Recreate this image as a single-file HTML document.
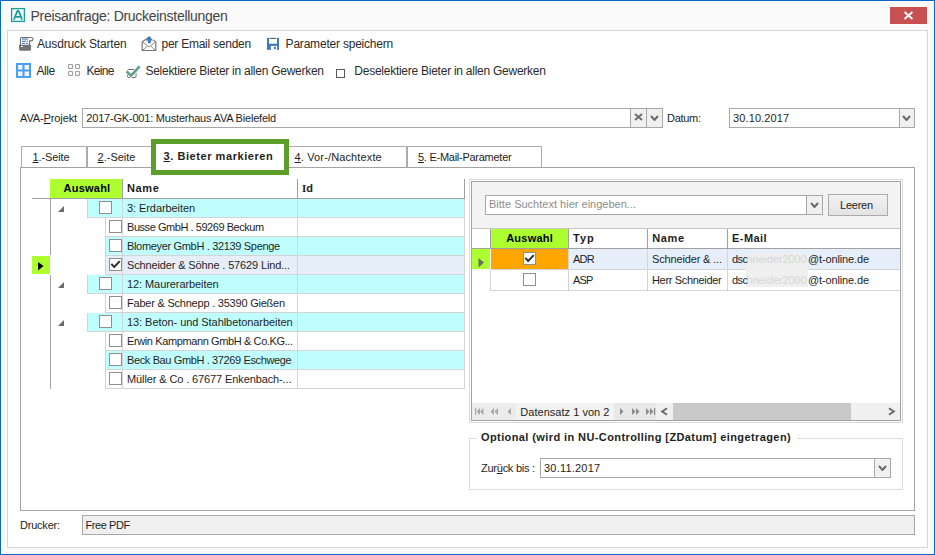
<!DOCTYPE html>
<html><head><meta charset="utf-8"><style>
html,body{margin:0;padding:0;}
body{width:935px;height:555px;position:relative;overflow:hidden;background:#fafafa;font-family:"Liberation Sans", sans-serif;}
body>div,body>svg{position:absolute;}
.t{white-space:nowrap;}
u{text-decoration:underline;text-underline-offset:1px;text-decoration-thickness:1px;}
</style></head><body>
<div style="left:0px;top:0px;width:935px;height:555px;border:1px solid #0a66c9;box-sizing:border-box;background:#fafafa;"></div>
<svg style="left:10px;top:7px" width="16" height="16" viewBox="0 0 16 16"><rect x="1.6" y="1.6" width="12.8" height="12.8" stroke="#1a9b9b" stroke-width="1.3" fill="none"/><path d="M3.9 12.8 L7.3 4 H8.7 L12.1 12.8 M5.4 9.8 H10.6" stroke="#1a9b9b" stroke-width="1.8" stroke-linejoin="bevel" fill="none"/></svg>
<div style="left:890px;top:7px;width:37px;height:17px;background:#c75050;"></div>
<svg style="left:903px;top:11px" width="11" height="9" viewBox="0 0 11 9"><path d="M1.5 1 L9.5 8 M9.5 1 L1.5 8" stroke="#fff" stroke-width="1.8" fill="none"/></svg>
<div style="left:7px;top:30px;width:921px;height:518px;border:1px solid #d6d6d6;box-sizing:border-box;background:#ffffff;"></div>
<svg style="left:18px;top:36px" width="16" height="16" viewBox="0 0 16 16"><path d="M2.5 9 V2.5 Q2.5 1.5 3.5 1.5 H13.2 A1.7 1.7 0 0 1 13.2 4.9 H11.5 V9" stroke="#707070" stroke-width="1.1" fill="#fff"/><rect x="4" y="2.5" width="6" height="1.1" fill="#3d7cc2"/><rect x="4" y="4.7" width="4" height="1.1" fill="#3d7cc2"/><rect x="9" y="4.7" width="1" height="1.1" fill="#3d7cc2"/><rect x="4" y="6.8" width="3" height="1.1" fill="#3d7cc2"/><rect x="8" y="6.8" width="2" height="1.1" fill="#3d7cc2"/><path d="M1.1 8.8 H13.1 V13.6 Q13.1 14.7 12 14.7 H2.2 Q1.1 14.7 1.1 13.6 Z" fill="#727272"/><rect x="3" y="10" width="1.8" height="1" fill="#fff"/></svg>
<svg style="left:141px;top:35px" width="17" height="17" viewBox="0 0 17 17"><path d="M1.2 15.5 V6.8 L8.1 2.2 L14.8 6.8 V15.5 Z" stroke="#767676" stroke-width="1.2" fill="#fff"/><path d="M2 7.3 L8.1 12 L14 7.3 M2 15 L6.2 11.3 M14 15 L10 11.3" stroke="#8a8a8a" stroke-width="1" fill="none"/><path d="M7 3 L12.2 3 L12.2 7 L7 7 Z" fill="#fff"/><path d="M8.3 1 L12 5.5 H9.8 V8.2 H6.8 V5.5 H4.6 Z" fill="#3d7cc2"/></svg>
<svg style="left:266px;top:37px" width="14" height="14" viewBox="0 0 14 14"><rect x="1" y="0.8" width="12" height="12.1" fill="#3b78c0"/><rect x="3" y="0.8" width="8" height="5.9" fill="#fff"/><rect x="3.7" y="1.1" width="6.5" height="0.9" fill="#555"/><rect x="4.8" y="8.9" width="6.3" height="4" fill="#fff"/><rect x="7.9" y="9.8" width="2" height="2.3" fill="#3b78c0"/></svg>
<svg style="left:16px;top:63px" width="15" height="15" viewBox="0 0 15 15"><rect x="0" y="0" width="15" height="15" fill="#4a9ff0"/><rect x="2" y="2" width="4.5" height="4.5" fill="#eef6ff"/><rect x="8.5" y="2" width="4.5" height="4.5" fill="#eef6ff"/><rect x="2" y="8.5" width="4.5" height="4.5" fill="#eef6ff"/><rect x="8.5" y="8.5" width="4.5" height="4.5" fill="#eef6ff"/></svg>
<svg style="left:67px;top:63px" width="14" height="14" viewBox="0 0 14 14"><rect x="1.5" y="1.5" width="4" height="4" rx="0.8" stroke="#a0a0a0" stroke-width="1.15" fill="none"/><rect x="3.0" y="3.0" width="1" height="1" fill="#e4e4e4"/><rect x="8.5" y="1.5" width="4" height="4" rx="0.8" stroke="#a0a0a0" stroke-width="1.15" fill="none"/><rect x="10.0" y="3.0" width="1" height="1" fill="#e4e4e4"/><rect x="1.5" y="8.5" width="4" height="4" rx="0.8" stroke="#a0a0a0" stroke-width="1.15" fill="none"/><rect x="3.0" y="10.0" width="1" height="1" fill="#e4e4e4"/><rect x="8.5" y="8.5" width="4" height="4" rx="0.8" stroke="#a0a0a0" stroke-width="1.15" fill="none"/><rect x="10.0" y="10.0" width="1" height="1" fill="#e4e4e4"/></svg>
<svg style="left:122px;top:60px" width="20" height="20" viewBox="0 0 20 20"><rect x="5.5" y="9.5" width="8.5" height="8" rx="1" stroke="#6d6d6d" stroke-width="1" fill="none"/><path d="M4.6 11.3 L9 15.6 L17.6 6.4" stroke="#fff" stroke-width="4" fill="none"/><path d="M4.6 11.3 L9 15.6 L17.6 6.4" stroke="#5c9e8a" stroke-width="2.5" fill="none"/></svg>
<div style="left:336px;top:69px;width:9px;height:9px;border:1px solid #5a5a5a;box-sizing:border-box;background:#fff;"></div>
<div style="left:82px;top:108px;width:581px;height:20px;border:1px solid #a8a8a8;box-sizing:border-box;background:#fff;"></div>
<div style="left:630px;top:108px;width:1px;height:20px;background:#a8a8a8;"></div>
<div style="left:646px;top:108px;width:1px;height:20px;background:#a8a8a8;"></div>
<div style="left:631px;top:109px;width:15px;height:18px;background:#f0f0f0;"></div>
<div style="left:647px;top:109px;width:15px;height:18px;background:#f0f0f0;"></div>
<svg style="left:634px;top:113px" width="9" height="8" viewBox="0 0 9 8"><path d="M1 1 L8 7 M8 1 L1 7" stroke="#6a6a6a" stroke-width="1.8"/></svg>
<svg style="left:650px;top:115px" width="9" height="6" viewBox="0 0 9 6"><path d="M1 1 L4.5 5 L8 1" stroke="#6a6a6a" stroke-width="2" fill="none"/></svg>
<div style="left:729px;top:108px;width:186px;height:20px;border:1px solid #a8a8a8;box-sizing:border-box;background:#fff;"></div>
<div style="left:899px;top:108px;width:1px;height:20px;background:#a8a8a8;"></div>
<div style="left:900px;top:109px;width:14px;height:18px;background:#f0f0f0;"></div>
<svg style="left:902px;top:115px" width="9" height="6" viewBox="0 0 9 6"><path d="M1 1 L4.5 5 L8 1" stroke="#6a6a6a" stroke-width="2" fill="none"/></svg>
<div style="left:21px;top:146px;width:66px;height:23px;border:1px solid #acacac;box-sizing:border-box;background:#fff;"></div>
<div style="left:87px;top:146px;width:66px;height:23px;border:1px solid #acacac;box-sizing:border-box;background:#fff;"></div>
<div style="left:288px;top:146px;width:119px;height:23px;border:1px solid #acacac;box-sizing:border-box;background:#fff;"></div>
<div style="left:407px;top:146px;width:135px;height:23px;border:1px solid #acacac;box-sizing:border-box;background:#fff;"></div>
<div style="left:20px;top:167px;width:895px;height:344px;border:1px solid #a3a3a3;box-sizing:border-box;background:#fff;"></div>
<div style="left:151px;top:139px;width:138px;height:36px;background:#fff;border:5px solid #5c9e2a;box-sizing:border-box;"></div>
<div style="left:50px;top:179px;width:72px;height:19px;background:#adff2f;"></div>
<div style="left:32px;top:198px;width:433px;height:1px;background:#a0a0a0;"></div>
<div style="left:122px;top:179px;width:1px;height:20px;background:#a0a0a0;"></div>
<div style="left:297px;top:179px;width:1px;height:20px;background:#a0a0a0;"></div>
<div style="left:464px;top:179px;width:1px;height:20px;background:#a0a0a0;"></div>
<div style="left:50px;top:199px;width:1px;height:56px;background:#a0a0a0;"></div>
<div style="left:50px;top:275px;width:1px;height:114px;background:#a0a0a0;"></div>
<div style="left:87px;top:199px;width:377px;height:18px;background:#c0ffff;"></div>
<div style="left:87px;top:217px;width:378px;height:1px;background:#d4d4d4;"></div>
<div style="left:87px;top:199px;width:1px;height:19px;background:#d4d4d4;"></div>
<div style="left:122px;top:199px;width:1px;height:19px;background:#d4d4d4;"></div>
<div style="left:297px;top:199px;width:1px;height:19px;background:#d4d4d4;"></div>
<div style="left:464px;top:199px;width:1px;height:19px;background:#d4d4d4;"></div>
<svg style="left:57px;top:205px" width="8" height="8" viewBox="0 0 8 8"><path d="M7 1 V7 H1 Z" fill="#6b6b6b"/></svg>
<div style="left:99px;top:201px;width:13px;height:13px;border:1px solid #8f8f8f;box-sizing:border-box;background:#fff;"></div>
<div style="left:105px;top:218px;width:359px;height:18px;background:#fff;"></div>
<div style="left:105px;top:236px;width:360px;height:1px;background:#d4d4d4;"></div>
<div style="left:105px;top:218px;width:1px;height:19px;background:#d4d4d4;"></div>
<div style="left:122px;top:218px;width:1px;height:19px;background:#d4d4d4;"></div>
<div style="left:297px;top:218px;width:1px;height:19px;background:#d4d4d4;"></div>
<div style="left:464px;top:218px;width:1px;height:19px;background:#d4d4d4;"></div>
<div style="left:109px;top:220px;width:13px;height:13px;border:1px solid #8f8f8f;box-sizing:border-box;background:#fff;"></div>
<div style="left:105px;top:237px;width:359px;height:18px;background:#c0ffff;"></div>
<div style="left:105px;top:255px;width:360px;height:1px;background:#d4d4d4;"></div>
<div style="left:105px;top:237px;width:1px;height:19px;background:#d4d4d4;"></div>
<div style="left:122px;top:237px;width:1px;height:19px;background:#d4d4d4;"></div>
<div style="left:297px;top:237px;width:1px;height:19px;background:#d4d4d4;"></div>
<div style="left:464px;top:237px;width:1px;height:19px;background:#d4d4d4;"></div>
<div style="left:109px;top:239px;width:13px;height:13px;border:1px solid #8f8f8f;box-sizing:border-box;background:#fff;"></div>
<div style="left:105px;top:256px;width:359px;height:18px;background:#e6eff9;"></div>
<div style="left:105px;top:274px;width:360px;height:1px;background:#d4d4d4;"></div>
<div style="left:105px;top:256px;width:1px;height:19px;background:#d4d4d4;"></div>
<div style="left:122px;top:256px;width:1px;height:19px;background:#d4d4d4;"></div>
<div style="left:297px;top:256px;width:1px;height:19px;background:#d4d4d4;"></div>
<div style="left:464px;top:256px;width:1px;height:19px;background:#d4d4d4;"></div>
<div style="left:109px;top:258px;width:13px;height:13px;border:1px solid #8f8f8f;box-sizing:border-box;background:#fff;"></div>
<svg style="left:109px;top:258px" width="13" height="13" viewBox="0 0 13 13"><path d="M2.3 5.9 L5.2 9 L10.8 3.1" stroke="#333" stroke-width="2.1" fill="none"/></svg>
<div style="left:87px;top:275px;width:377px;height:18px;background:#c0ffff;"></div>
<div style="left:87px;top:293px;width:378px;height:1px;background:#d4d4d4;"></div>
<div style="left:87px;top:275px;width:1px;height:19px;background:#d4d4d4;"></div>
<div style="left:122px;top:275px;width:1px;height:19px;background:#d4d4d4;"></div>
<div style="left:297px;top:275px;width:1px;height:19px;background:#d4d4d4;"></div>
<div style="left:464px;top:275px;width:1px;height:19px;background:#d4d4d4;"></div>
<svg style="left:57px;top:281px" width="8" height="8" viewBox="0 0 8 8"><path d="M7 1 V7 H1 Z" fill="#6b6b6b"/></svg>
<div style="left:99px;top:277px;width:13px;height:13px;border:1px solid #8f8f8f;box-sizing:border-box;background:#fff;"></div>
<div style="left:105px;top:294px;width:359px;height:18px;background:#fff;"></div>
<div style="left:105px;top:312px;width:360px;height:1px;background:#d4d4d4;"></div>
<div style="left:105px;top:294px;width:1px;height:19px;background:#d4d4d4;"></div>
<div style="left:122px;top:294px;width:1px;height:19px;background:#d4d4d4;"></div>
<div style="left:297px;top:294px;width:1px;height:19px;background:#d4d4d4;"></div>
<div style="left:464px;top:294px;width:1px;height:19px;background:#d4d4d4;"></div>
<div style="left:109px;top:296px;width:13px;height:13px;border:1px solid #8f8f8f;box-sizing:border-box;background:#fff;"></div>
<div style="left:87px;top:313px;width:377px;height:18px;background:#c0ffff;"></div>
<div style="left:87px;top:331px;width:378px;height:1px;background:#d4d4d4;"></div>
<div style="left:87px;top:313px;width:1px;height:19px;background:#d4d4d4;"></div>
<div style="left:122px;top:313px;width:1px;height:19px;background:#d4d4d4;"></div>
<div style="left:297px;top:313px;width:1px;height:19px;background:#d4d4d4;"></div>
<div style="left:464px;top:313px;width:1px;height:19px;background:#d4d4d4;"></div>
<svg style="left:57px;top:319px" width="8" height="8" viewBox="0 0 8 8"><path d="M7 1 V7 H1 Z" fill="#6b6b6b"/></svg>
<div style="left:99px;top:315px;width:13px;height:13px;border:1px solid #8f8f8f;box-sizing:border-box;background:#fff;"></div>
<div style="left:105px;top:332px;width:359px;height:18px;background:#fff;"></div>
<div style="left:105px;top:350px;width:360px;height:1px;background:#d4d4d4;"></div>
<div style="left:105px;top:332px;width:1px;height:19px;background:#d4d4d4;"></div>
<div style="left:122px;top:332px;width:1px;height:19px;background:#d4d4d4;"></div>
<div style="left:297px;top:332px;width:1px;height:19px;background:#d4d4d4;"></div>
<div style="left:464px;top:332px;width:1px;height:19px;background:#d4d4d4;"></div>
<div style="left:109px;top:334px;width:13px;height:13px;border:1px solid #8f8f8f;box-sizing:border-box;background:#fff;"></div>
<div style="left:105px;top:351px;width:359px;height:18px;background:#c0ffff;"></div>
<div style="left:105px;top:369px;width:360px;height:1px;background:#d4d4d4;"></div>
<div style="left:105px;top:351px;width:1px;height:19px;background:#d4d4d4;"></div>
<div style="left:122px;top:351px;width:1px;height:19px;background:#d4d4d4;"></div>
<div style="left:297px;top:351px;width:1px;height:19px;background:#d4d4d4;"></div>
<div style="left:464px;top:351px;width:1px;height:19px;background:#d4d4d4;"></div>
<div style="left:109px;top:353px;width:13px;height:13px;border:1px solid #8f8f8f;box-sizing:border-box;background:#fff;"></div>
<div style="left:105px;top:370px;width:359px;height:18px;background:#fff;"></div>
<div style="left:105px;top:388px;width:360px;height:1px;background:#d4d4d4;"></div>
<div style="left:105px;top:370px;width:1px;height:19px;background:#d4d4d4;"></div>
<div style="left:122px;top:370px;width:1px;height:19px;background:#d4d4d4;"></div>
<div style="left:297px;top:370px;width:1px;height:19px;background:#d4d4d4;"></div>
<div style="left:464px;top:370px;width:1px;height:19px;background:#d4d4d4;"></div>
<div style="left:109px;top:372px;width:13px;height:13px;border:1px solid #8f8f8f;box-sizing:border-box;background:#fff;"></div>
<div style="left:32px;top:256px;width:18px;height:18px;background:#adff2f;"></div>
<svg style="left:37px;top:261px" width="8" height="11" viewBox="0 0 8 11"><path d="M1 1 L6.5 5 L1 9.5 Z" fill="#000"/></svg>
<div style="left:469px;top:179px;width:434px;height:244px;border:1px solid #dadada;box-sizing:border-box;background:#fff;"></div>
<div style="left:471px;top:181px;width:430px;height:240px;border:1px solid #a3a3a3;box-sizing:border-box;background:#f3f3f3;"></div>
<div style="left:485px;top:195px;width:338px;height:20px;border:1px solid #a8a8a8;box-sizing:border-box;background:#fff;"></div>
<div style="left:806px;top:195px;width:1px;height:20px;background:#a8a8a8;"></div>
<div style="left:807px;top:196px;width:15px;height:18px;background:#f0f0f0;"></div>
<svg style="left:810px;top:202px" width="9" height="6" viewBox="0 0 9 6"><path d="M1 1 L4.5 5 L8 1" stroke="#6a6a6a" stroke-width="2" fill="none"/></svg>
<div style="left:828px;top:194px;width:60px;height:22px;border:1px solid #acacac;box-sizing:border-box;background:linear-gradient(#f2f2f2,#e3e3e3);"></div>
<div style="left:472px;top:228px;width:428px;height:175px;background:#fff;"></div>
<div style="left:472px;top:228px;width:428px;height:1px;background:#c8c8c8;"></div>
<div style="left:491px;top:229px;width:77px;height:19px;background:#adff2f;"></div>
<div style="left:472px;top:248px;width:428px;height:1px;background:#a0a0a0;"></div>
<div style="left:490px;top:229px;width:1px;height:20px;background:#a0a0a0;"></div>
<div style="left:568px;top:229px;width:1px;height:20px;background:#a0a0a0;"></div>
<div style="left:647px;top:229px;width:1px;height:20px;background:#a0a0a0;"></div>
<div style="left:727px;top:229px;width:1px;height:20px;background:#a0a0a0;"></div>
<div style="left:472px;top:249px;width:18px;height:20px;background:#adff2f;"></div>
<svg style="left:477px;top:257px" width="9" height="12" viewBox="0 0 9 12"><path d="M1.5 1 L7 5.5 L1.5 10.5 Z" fill="#6b6b6b"/></svg>
<div style="left:491px;top:249px;width:77px;height:20px;background:#ffa500;"></div>
<div style="left:569px;top:249px;width:331px;height:20px;background:#e6eff9;"></div>
<div style="left:490px;top:269px;width:410px;height:1px;background:#d4d4d4;"></div>
<div style="left:568px;top:249px;width:1px;height:21px;background:#d4d4d4;"></div>
<div style="left:647px;top:249px;width:1px;height:21px;background:#d4d4d4;"></div>
<div style="left:727px;top:249px;width:1px;height:21px;background:#d4d4d4;"></div>
<div style="left:523px;top:252px;width:13px;height:13px;border:1px solid #8f8f8f;box-sizing:border-box;background:#fff;"></div>
<svg style="left:523px;top:252px" width="13" height="13" viewBox="0 0 13 13"><path d="M2.3 5.9 L5.2 9 L10.8 3.1" stroke="#333" stroke-width="2.1" fill="none"/></svg>
<div style="left:490px;top:290px;width:410px;height:1px;background:#d4d4d4;"></div>
<div style="left:490px;top:270px;width:1px;height:21px;background:#d4d4d4;"></div>
<div style="left:568px;top:270px;width:1px;height:21px;background:#d4d4d4;"></div>
<div style="left:647px;top:270px;width:1px;height:21px;background:#d4d4d4;"></div>
<div style="left:727px;top:270px;width:1px;height:21px;background:#d4d4d4;"></div>
<div style="left:523px;top:273px;width:13px;height:13px;border:1px solid #8f8f8f;box-sizing:border-box;background:#fff;"></div>
<div style="left:746px;top:253px;width:62px;height:34px;background:#efefef;"></div>
<div style="left:472px;top:403px;width:44px;height:17px;background:#ececec;"></div>
<div style="left:614px;top:403px;width:42px;height:17px;background:#e8e8e8;"></div>
<div style="left:656px;top:403px;width:17px;height:17px;background:#f0f0f0;"></div>
<div style="left:673px;top:403px;width:178px;height:17px;background:#c9c9c9;"></div>
<div style="left:851px;top:403px;width:49px;height:17px;background:#f0f0f0;"></div>
<svg style="left:474px;top:407px" width="40" height="9" viewBox="0 0 40 9"><rect x="1" y="1" width="1.2" height="7" fill="#a8a8a8"/><path d="M6 1 L2.5 4.5 L6 8 Z M9.5 1 L6 4.5 L9.5 8 Z" fill="#a8a8a8"/><path d="M20 1 L16.5 4.5 L20 8 Z M24 1 L20.5 4.5 L24 8 Z" fill="#a8a8a8"/><path d="M37 1 L33.5 4.5 L37 8 Z" fill="#a8a8a8"/></svg>
<svg style="left:618px;top:407px" width="40" height="9" viewBox="0 0 40 9"><path d="M2 1 L5.5 4.5 L2 8 Z" fill="#8a8a8a"/><path d="M14 1 L17.5 4.5 L14 8 Z M18 1 L21.5 4.5 L18 8 Z" fill="#8a8a8a"/><path d="M28 1 L31.5 4.5 L28 8 Z M32 1 L35.5 4.5 L32 8 Z" fill="#8a8a8a"/><rect x="36" y="1" width="1.2" height="7" fill="#8a8a8a"/></svg>
<svg style="left:659px;top:407px" width="10" height="9" viewBox="0 0 10 9"><path d="M8 1.2 L3.2 4.5 L8 7.8" stroke="#6b6b6b" stroke-width="2" fill="none"/></svg>
<svg style="left:886px;top:407px" width="10" height="9" viewBox="0 0 10 9"><path d="M3 1.2 L7.8 4.5 L3 7.8" stroke="#6b6b6b" stroke-width="2" fill="none"/></svg>
<div style="left:469px;top:438px;width:434px;height:52px;border:1px solid #dcdcdc;box-sizing:border-box;"></div>
<div style="left:477px;top:430px;width:320px;height:16px;background:#fff;"></div>
<div style="left:540px;top:458px;width:351px;height:20px;border:1px solid #a8a8a8;box-sizing:border-box;background:#fff;"></div>
<div style="left:874px;top:458px;width:1px;height:20px;background:#a8a8a8;"></div>
<div style="left:875px;top:459px;width:15px;height:18px;background:#f0f0f0;"></div>
<svg style="left:878px;top:465px" width="9" height="6" viewBox="0 0 9 6"><path d="M1 1 L4.5 5 L8 1" stroke="#6a6a6a" stroke-width="2" fill="none"/></svg>
<div style="left:82px;top:515px;width:833px;height:20px;border:1px solid #a8a8a8;box-sizing:border-box;background:#f0f0f0;"></div>
<div class="t" id="t0" style="left:30.5px;top:8.78px;font-size:14px;line-height:14px;color:#444;letter-spacing:-0.288px;">Preisanfrage: Druckeinstellungen</div>
<div class="t" id="t1" style="left:37px;top:38.08px;font-size:12px;line-height:12px;color:#2b2b2b;letter-spacing:-0.158px;">Ausdruck Starten</div>
<div class="t" id="t2" style="left:161.5px;top:38.08px;font-size:12px;line-height:12px;color:#2b2b2b;letter-spacing:-0.248px;">per Email senden</div>
<div class="t" id="t3" style="left:285.6px;top:38.08px;font-size:12px;line-height:12px;color:#2b2b2b;letter-spacing:-0.206px;">Parameter speichern</div>
<div class="t" id="t4" style="left:36.5px;top:65.28px;font-size:12px;line-height:12px;color:#2b2b2b;letter-spacing:-0.445px;">Alle</div>
<div class="t" id="t5" style="left:86.5px;top:65.28px;font-size:12px;line-height:12px;color:#2b2b2b;letter-spacing:-0.679px;">Keine</div>
<div class="t" id="t6" style="left:145.4px;top:65.28px;font-size:12px;line-height:12px;color:#2b2b2b;letter-spacing:-0.258px;">Selektiere Bieter in allen Gewerken</div>
<div class="t" id="t7" style="left:354.3px;top:65.28px;font-size:12px;line-height:12px;color:#2b2b2b;letter-spacing:-0.253px;">Deselektiere Bieter in allen Gewerken</div>
<div class="t" id="t8" style="left:20px;top:112.88px;font-size:11px;line-height:11px;color:#1e1e1e;letter-spacing:-0.122px;">AVA-<u>P</u>rojekt</div>
<div class="t" id="t9" style="left:86.3px;top:112.88px;font-size:11px;line-height:11px;color:#1e1e1e;letter-spacing:-0.200px;">2017-GK-001: Musterhaus AVA Bielefeld</div>
<div class="t" id="t10" style="left:667px;top:112.88px;font-size:11px;line-height:11px;color:#1e1e1e;letter-spacing:-0.280px;">Datum:</div>
<div class="t" id="t11" style="left:733px;top:112.88px;font-size:11px;line-height:11px;color:#1e1e1e;letter-spacing:0.118px;">30.10.2017</div>
<div class="t" id="t12" style="left:32.5px;top:152.18px;font-size:11px;line-height:11px;color:#1e1e1e;letter-spacing:-0.113px;"><u>1</u>.-Seite</div>
<div class="t" id="t13" style="left:97.6px;top:152.18px;font-size:11px;line-height:11px;color:#1e1e1e;letter-spacing:-0.013px;"><u>2</u>.-Seite</div>
<div class="t" id="t14" style="left:163.5px;top:150.68px;font-size:11px;line-height:11px;color:#1e1e1e;font-weight:bold;letter-spacing:0.565px;"><u>3</u>. Bieter markieren</div>
<div class="t" id="t15" style="left:294.6px;top:152.18px;font-size:11px;line-height:11px;color:#1e1e1e;letter-spacing:0.133px;"><u>4</u>. Vor-/Nachtexte</div>
<div class="t" id="t16" style="left:418px;top:152.18px;font-size:11px;line-height:11px;color:#1e1e1e;letter-spacing:-0.264px;"><u>5</u>. E-Mail-Parameter</div>
<div class="t" id="t17" style="left:63.5px;top:183.38px;font-size:11px;line-height:11px;color:#000;font-weight:bold;letter-spacing:0.238px;">Auswahl</div>
<div class="t" id="t18" style="left:127px;top:183.38px;font-size:11px;line-height:11px;color:#1e1e1e;font-weight:bold;letter-spacing:0.653px;">Name</div>
<div class="t" id="t19" style="left:302px;top:183.38px;font-size:11px;line-height:11px;color:#1e1e1e;font-weight:bold;"><span style="font-family:Liberation Serif">I</span>d</div>
<div class="t" id="t20" style="left:127px;top:202.88px;font-size:11px;line-height:11px;color:#1e1e1e;letter-spacing:-0.075px;">3: Erdarbeiten</div>
<div class="t" id="t21" style="left:127px;top:221.88px;font-size:11px;line-height:11px;color:#1e1e1e;letter-spacing:-0.450px;">Busse GmbH . 59269 Beckum</div>
<div class="t" id="t22" style="left:127px;top:240.88px;font-size:11px;line-height:11px;color:#1e1e1e;letter-spacing:-0.330px;">Blomeyer GmbH . 32139 Spenge</div>
<div class="t" id="t23" style="left:127px;top:259.88px;font-size:11px;line-height:11px;color:#1e1e1e;letter-spacing:-0.141px;">Schneider &amp; Söhne . 57629 Lind...</div>
<div class="t" id="t24" style="left:127px;top:278.88px;font-size:11px;line-height:11px;color:#1e1e1e;letter-spacing:-0.078px;">12: Maurerarbeiten</div>
<div class="t" id="t25" style="left:127px;top:297.88px;font-size:11px;line-height:11px;color:#1e1e1e;letter-spacing:-0.220px;">Faber &amp; Schnepp . 35390 Gießen</div>
<div class="t" id="t26" style="left:127px;top:316.88px;font-size:11px;line-height:11px;color:#1e1e1e;letter-spacing:-0.061px;">13: Beton- und Stahlbetonarbeiten</div>
<div class="t" id="t27" style="left:127px;top:335.88px;font-size:11px;line-height:11px;color:#1e1e1e;letter-spacing:-0.387px;">Erwin Kampmann GmbH &amp; Co.KG...</div>
<div class="t" id="t28" style="left:127px;top:354.88px;font-size:11px;line-height:11px;color:#1e1e1e;letter-spacing:-0.375px;">Beck Bau GmbH . 37269 Eschwege</div>
<div class="t" id="t29" style="left:127px;top:373.88px;font-size:11px;line-height:11px;color:#1e1e1e;letter-spacing:-0.112px;">Müller &amp; Co . 67677 Enkenbach-...</div>
<div class="t" id="t30" style="left:489px;top:199.38px;font-size:11px;line-height:11px;color:#8c8c8c;letter-spacing:0.010px;">Bitte Suchtext hier eingeben...</div>
<div class="t" id="t31" style="left:840px;top:199.88px;font-size:11px;line-height:11px;color:#1e1e1e;letter-spacing:-0.227px;">Leeren</div>
<div class="t" id="t32" style="left:506.2px;top:233.48px;font-size:11px;line-height:11px;color:#000;font-weight:bold;letter-spacing:0.238px;">Auswahl</div>
<div class="t" id="t33" style="left:573px;top:232.98px;font-size:11px;line-height:11px;color:#1e1e1e;font-weight:bold;letter-spacing:0.990px;">Typ</div>
<div class="t" id="t34" style="left:652.3px;top:232.98px;font-size:11px;line-height:11px;color:#1e1e1e;font-weight:bold;letter-spacing:0.586px;">Name</div>
<div class="t" id="t35" style="left:732px;top:232.98px;font-size:11px;line-height:11px;color:#1e1e1e;font-weight:bold;letter-spacing:0.453px;">E-Mail</div>
<div class="t" id="t36" style="left:573px;top:254.28px;font-size:11px;line-height:11px;color:#1e1e1e;letter-spacing:-0.800px;">ADR</div>
<div class="t" id="t37" style="left:652px;top:253.88px;font-size:11px;line-height:11px;color:#1e1e1e;letter-spacing:-0.150px;">Schneider &amp; ...</div>
<div class="t" id="t38" style="left:732px;top:254.28px;font-size:11px;line-height:11px;color:#1e1e1e;letter-spacing:-0.559px;">dsc</div>
<div class="t" id="t39" style="left:808px;top:253.88px;font-size:11px;line-height:11px;color:#1e1e1e;letter-spacing:-0.129px;">@t-online.de</div>
<div class="t" id="t40" style="left:573px;top:275.18px;font-size:11px;line-height:11px;color:#1e1e1e;letter-spacing:-0.800px;">ASP</div>
<div class="t" id="t41" style="left:652px;top:275.18px;font-size:11px;line-height:11px;color:#1e1e1e;letter-spacing:-0.332px;">Herr Schneider</div>
<div class="t" id="t42" style="left:732px;top:275.18px;font-size:11px;line-height:11px;color:#1e1e1e;letter-spacing:-0.559px;">dsc</div>
<div class="t" id="t43" style="left:808px;top:274.88px;font-size:11px;line-height:11px;color:#1e1e1e;letter-spacing:-0.129px;">@t-online.de</div>
<div class="t" id="t44" style="left:746.5px;top:253.88px;font-size:11px;line-height:11px;color:#d6d6d6;letter-spacing:-0.105px;">hneider2000</div>
<div class="t" id="t45" style="left:746.5px;top:274.88px;font-size:11px;line-height:11px;color:#d6d6d6;letter-spacing:-0.105px;">hneider2000</div>
<div class="t" id="t46" style="left:520.3px;top:407.08px;font-size:11px;line-height:11px;color:#1e1e1e;letter-spacing:0.028px;">Datensatz 1 von 2</div>
<div class="t" id="t47" style="left:481px;top:432.48px;font-size:11px;line-height:11px;color:#1e1e1e;font-weight:bold;letter-spacing:0.401px;">Optional (wird in NU-Controlling [ZDatum] eingetragen)</div>
<div class="t" id="t48" style="left:481px;top:462.88px;font-size:11px;line-height:11px;color:#1e1e1e;letter-spacing:-0.254px;">Zur<u>ü</u>ck bis :</div>
<div class="t" id="t49" style="left:544px;top:462.88px;font-size:11px;line-height:11px;color:#1e1e1e;letter-spacing:0.209px;">30.11.2017</div>
<div class="t" id="t50" style="left:20px;top:520.18px;font-size:11px;line-height:11px;color:#1e1e1e;letter-spacing:-0.215px;">Drucker:</div>
<div class="t" id="t51" style="left:85.5px;top:520.18px;font-size:11px;line-height:11px;color:#1e1e1e;letter-spacing:-0.422px;">Free PDF</div>
</body></html>
